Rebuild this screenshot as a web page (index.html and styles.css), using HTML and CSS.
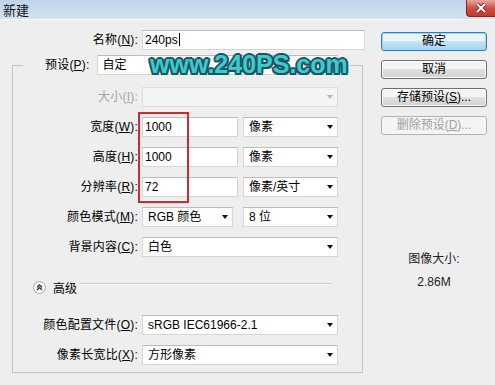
FILE: index.html
```html
<!DOCTYPE html>
<html lang="zh-CN">
<head>
  <meta charset="UTF-8">
  <title>新建</title>
  <link rel="stylesheet" href="styles.css">
</head>
<body>
  <div class="titlebar">
    <span class="title">新建</span>
    <span class="close">
      <svg width="12" height="10" viewBox="0 0 12 10">
        <path d="M2 1 L10 9 M10 1 L2 9" stroke="#6a2219" stroke-width="3.6"/>
        <path d="M2 1 L10 9 M10 1 L2 9" stroke="#fff" stroke-width="2"/>
      </svg>
    </span>
  </div>

  <div class="content">
    <div class="main">
      <div class="name-row">
        <label class="lbl">名称(<u>N</u>):</label>
        <div class="field">240ps<span class="caret"></span></div>
      </div>

      <fieldset class="group">
        <legend class="preset">
          <label class="lbl">预设(<u>P</u>):</label>
          <div class="field select w-preset"><span>自定</span><i class="arrow"></i></div>
        </legend>

        <div class="rows">
          <div class="row">
            <label class="lbl disabled">大小(<u>I</u>):</label>
            <div class="ctrls"><div class="field select w-full off"><span></span><i class="arrow"></i></div></div>
          </div>
          <div class="row">
            <label class="lbl">宽度(<u>W</u>):</label>
            <div class="ctrls">
              <div class="field w-num">1000</div>
              <div class="field select w-unit"><span>像素</span><i class="arrow"></i></div>
            </div>
          </div>
          <div class="row">
            <label class="lbl">高度(<u>H</u>):</label>
            <div class="ctrls">
              <div class="field w-num">1000</div>
              <div class="field select w-unit"><span>像素</span><i class="arrow"></i></div>
            </div>
          </div>
          <div class="row">
            <label class="lbl">分辨率(<u>R</u>):</label>
            <div class="ctrls">
              <div class="field w-num">72</div>
              <div class="field select w-unit"><span>像素/英寸</span><i class="arrow"></i></div>
            </div>
          </div>
          <div class="row">
            <label class="lbl">颜色模式(<u>M</u>):</label>
            <div class="ctrls wide-gap">
              <div class="field select w-mode"><span>RGB 颜色</span><i class="arrow"></i></div>
              <div class="field select w-unit"><span>8 位</span><i class="arrow"></i></div>
            </div>
          </div>
          <div class="row">
            <label class="lbl">背景内容(<u>C</u>):</label>
            <div class="ctrls"><div class="field select w-full"><span>白色</span><i class="arrow"></i></div></div>
          </div>

          <div class="advanced">
            <svg class="chev" width="13" height="13" viewBox="0 0 13 13">
              <circle cx="6.5" cy="6.5" r="6" fill="#f7f7f7" stroke="#a9a9a9"/>
              <path d="M4 6.3 L6.5 3.8 L9 6.3 M4 9 L6.5 6.5 L9 9" fill="none" stroke="#333" stroke-width="1.3"/>
            </svg>
            <span>高级</span>
            <span class="rule"></span>
          </div>

          <div class="row after-adv">
            <label class="lbl">颜色配置文件(<u>O</u>):</label>
            <div class="ctrls"><div class="field select w-full"><span>sRGB IEC61966-2.1</span><i class="arrow"></i></div></div>
          </div>
          <div class="row">
            <label class="lbl">像素长宽比(<u>X</u>):</label>
            <div class="ctrls"><div class="field select w-full"><span>方形像素</span><i class="arrow"></i></div></div>
          </div>
        </div>
      </fieldset>
    </div>

    <div class="side">
      <div class="btn btn-default">确定</div>
      <div class="btn">取消</div>
      <div class="btn">存储预设(<u>S</u>)...</div>
      <div class="btn off">删除预设(<u>D</u>)...</div>
      <div class="info">
        <div>图像大小:</div>
        <div class="size">2.86M</div>
      </div>
    </div>

    <!-- overlays on top of the dialog -->
    <div class="watermark">www.240PS.com</div>
    <div class="mark-box"></div>
  </div>
</body>
</html>
```

FILE: styles.css
```css
* {
  box-sizing: border-box;
}

body {
  margin: 0;
  width: 495px;
  height: 385px;
  overflow: hidden;
  background-color: #eeeeee;
  font-family: "Liberation Sans", "Noto Sans CJK SC", sans-serif;
  font-size: 12px;
  color: #000;
}

u {
  text-decoration: underline;
  text-underline-offset: 1px;
}

/* title bar */
.titlebar {
  height: 20px;
  display: flex;
  justify-content: space-between;
  align-items: flex-start;
  background: linear-gradient(#bed4ea, #d3e2f1);
  border-bottom: 1px solid #f3f6fa;
}

.title {
  font-family: "Noto Sans CJK SC", sans-serif;
  font-size: 13px;
  line-height: 19px;
  padding-left: 3px;
  color: #111;
}

.close {
  width: 29px;
  height: 17px;
  display: flex;
  align-items: center;
  justify-content: center;
  background: linear-gradient(#e9a99f, #cc5145 50%, #c0392d);
  border: 1px solid #7d2b22;
  border-top: none;
  border-right: none;
  border-radius: 0 0 0 4px;
}

/* main area */
.content {
  position: relative;
  display: flex;
  padding: 10px 0 0 12px;
}

.main {
  width: 351px;
}

.lbl {
  text-align: right;
  line-height: 20px;
  white-space: nowrap;
  letter-spacing: 0.2px;
}

.lbl.disabled {
  color: #a3a3a3;
}

.name-row {
  display: grid;
  grid-template-columns: 126px 223px;
  column-gap: 4px;
  height: 20px;
}

.field {
  height: 20px;
  background-color: #fff;
  border: 1px solid #d6d6d6;
  border-top-color: #bcbcbc;
  padding: 0 2px;
  line-height: 18px;
  white-space: nowrap;
}

.caret {
  display: inline-block;
  width: 1px;
  height: 13px;
  background-color: #000;
  vertical-align: -2px;
  margin-left: 1px;
}

.select {
  display: flex;
  justify-content: space-between;
  align-items: center;
  padding: 0 2px 0 5px;
}

.arrow {
  width: 0;
  height: 0;
  margin-right: 2px;
  border-top: 4px solid #111;
  border-left: 3px solid transparent;
  border-right: 3px solid transparent;
}

.select.off {
  background-color: #f4f4f4;
  border-color: #dcdcdc;
}

.select.off .arrow {
  border-top-color: #b5b5b5;
}

/* group box */
.group {
  width: 351px;
  margin: 5px 0 0;
  padding: 0 0 7px;
  border: 1px solid #c3c3c3;
}

.preset {
  display: flex;
  align-items: center;
  height: 20px;
  margin-left: 10px;
  padding: 0 12px 0 22px;
}

.w-preset {
  width: 241px;
  margin-left: 7px;
}

.rows {
  display: flex;
  flex-direction: column;
  gap: 10px;
  padding-top: 12px;
}

.row {
  display: grid;
  grid-template-columns: 125px auto;
  column-gap: 4px;
  height: 20px;
}

.ctrls {
  display: flex;
  gap: 5px;
}

.ctrls.wide-gap {
  gap: 10px;
}

.w-full { width: 196px; }
.w-num { width: 96px; }
.w-unit { width: 95px; }
.w-mode { width: 91px; }

.advanced {
  display: flex;
  align-items: center;
  height: 20px;
  margin-top: 10px;
  padding-left: 20px;
  font-family: "Noto Sans CJK SC", sans-serif;
}

.chev {
  margin-right: 7px;
}

.rule {
  flex: 1;
  height: 2px;
  margin: 0 31px 6px 3px;
  border-top: 1px solid #c8c8c8;
  border-bottom: 1px solid #fafafa;
}

.after-adv {
  margin-top: 8px;
}

/* buttons column */
.side {
  width: 106px;
  margin-left: 18px;
  padding-top: 2px;
  display: flex;
  flex-direction: column;
  gap: 9px;
}

.btn {
  height: 19px;
  border: 1px solid #707070;
  border-radius: 3px;
  background: linear-gradient(#f4f4f4 45%, #e0e0e0 50%, #d2d2d2);
  box-shadow: inset 0 0 0 1px #fbfbfb;
  text-align: center;
  line-height: 17px;
}

.btn-default {
  border-color: #3d7bad;
  background: linear-gradient(#e8f5fc 45%, #c6e6f7 50%, #a4d5ef);
  box-shadow: inset 0 0 0 1px #97d8f8;
}

.btn.off {
  color: #a0a0a0;
  border-color: #adb2b5;
  background: #f4f4f4;
  box-shadow: none;
}

.info {
  margin-top: 107px;
  text-align: center;
  line-height: 16px;
  color: #222;
}

.size {
  margin-top: 7px;
}

/* overlays */
.watermark {
  position: absolute;
  left: 150px;
  top: 32px;
  font-family: "Liberation Sans", sans-serif;
  font-weight: bold;
  font-size: 25px;
  line-height: 25px;
  color: #3ccccd;
  text-shadow:
    -2px 0 #1d5362, 2px 0 #1d5362, 0 -2px #1d5362, 0 2px #1d5362,
    -1.5px -1.5px #1d5362, 1.5px -1.5px #1d5362,
    -1.5px 1.5px #1d5362, 1.5px 1.5px #1d5362;
}

.mark-box {
  position: absolute;
  left: 138px;
  top: 92px;
  width: 51px;
  height: 91px;
  border: 2px solid #cf2a2e;
}
```
